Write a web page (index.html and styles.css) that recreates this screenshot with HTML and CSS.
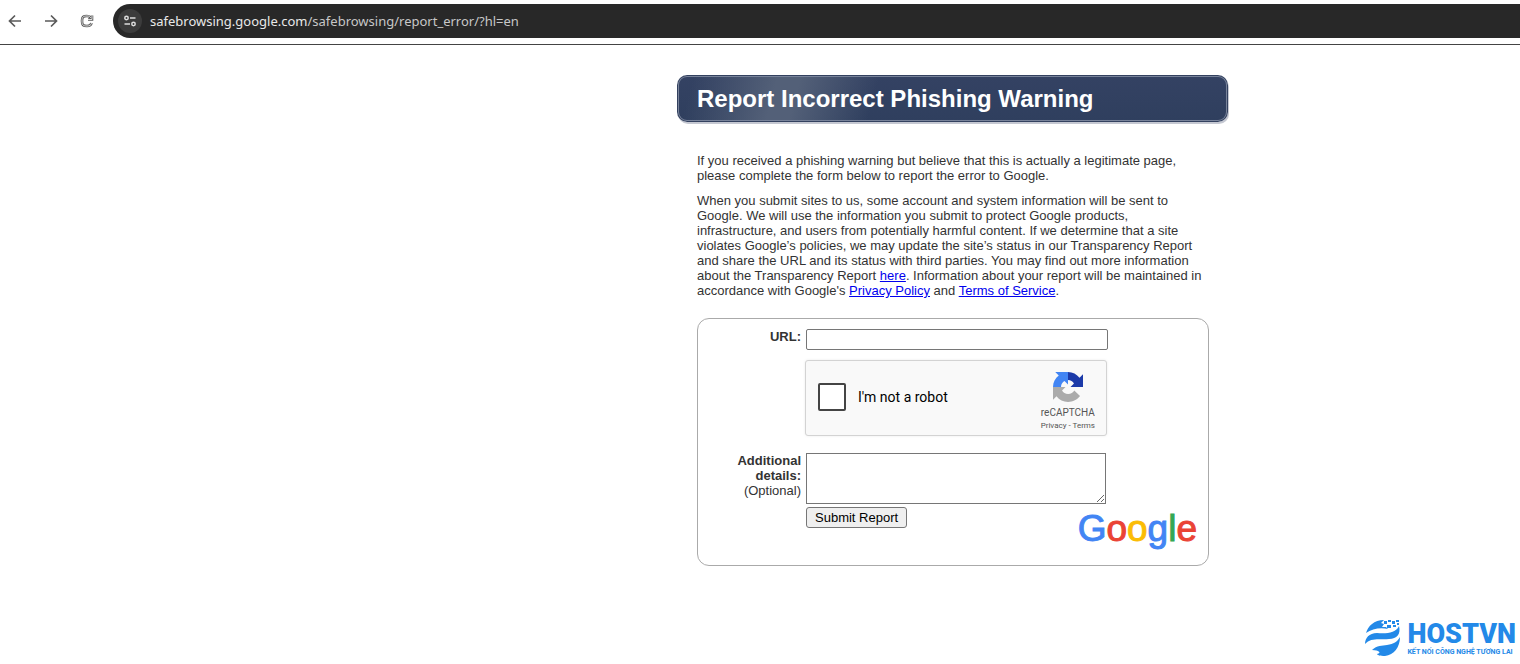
FILE: index.html
```html
<!DOCTYPE html>
<html lang="en">
<head>
  <meta charset="UTF-8">
  <meta name="viewport" content="width=device-width, initial-scale=1.0">
  <title>Report Incorrect Phishing Warning</title>
  <link rel="stylesheet" href="styles.css">
</head>
<body>
  <!-- Browser toolbar -->
  <header class="toolbar">
    <nav class="nav-buttons">
      <button type="button" aria-label="Back">
        <svg width="14" height="14" viewBox="0 0 14 14"><path d="M13 7H2M7 1.5L1.5 7L7 12.5"/></svg>
      </button>
      <button type="button" aria-label="Forward">
        <svg width="14" height="14" viewBox="0 0 14 14"><path d="M1 7H12M7 1.5L12.5 7L7 12.5"/></svg>
      </button>
      <button type="button" aria-label="Reload">
        <svg width="14" height="14" viewBox="0 0 14 14">
          <path class="edge" d="M11.5 9C11 11.5 9.5 12 7 12C3 12 2 11 2 7C2 3 3 2 7 2C9 2 10 2.5 11 4M12 1.5V5.500H8"/>
          <path class="core" d="M11.5 9C11 11.5 9.5 12 7 12C3 12 2 11 2 7C2 3 3 2 7 2C9 2 10 2.5 11 4M12 1.5V5.500H8"/>
        </svg>
      </button>
    </nav>
    <div class="address-bar">
      <button type="button" class="site-info" aria-label="View site information">
        <svg width="14" height="14" viewBox="0 0 14 14">
          <circle cx="3.5" cy="4" r="1.7"/>
          <path d="M7 4H12.5M1.5 10H7"/>
          <circle cx="10.5" cy="10" r="1.7"/>
        </svg>
      </button>
      <span class="url"><b>safebrowsing.google.com</b>/safebrowsing/report_error/?hl=en</span>
    </div>
  </header>

  <main class="page">
    <h1 class="banner">Report Incorrect Phishing Warning</h1>

    <div class="content">
      <p>If you received a phishing warning but believe that this is actually a legitimate page, please complete the form below to report the error to Google.</p>
      <p>When you submit sites to us, some account and system information will be sent to Google. We will use the information you submit to protect Google products, infrastructure, and users from potentially harmful content. If we determine that a site violates Google’s policies, we may update the site’s status in our Transparency Report and share the URL and its status with third parties. You may find out more information about the Transparency Report <a href="#">here</a>. Information about your report will be maintained in accordance with Google's <a href="#">Privacy Policy</a> and <a href="#">Terms of Service</a>.</p>

      <form class="report-form">
        <label for="url">URL:</label>
        <input type="text" id="url" name="url">

        <div class="captcha">
          <input type="checkbox" id="robot" name="robot">
          <label for="robot">I'm not a robot</label>
          <div class="captcha-brand">
            <svg width="32" height="32" viewBox="0 0 64 64">
              <path fill="#1c3aa9" d="M62 31.95V6.59l-7 7C49.5 6.57 41.5 2 31.94 2V18c5.500 0 9.500 2.800 12 7l-7 7H62"/>
              <path fill="#4285f4" d="M31.94 2H6.5l7 7C6.480 14.5 2 22.500 2 32.06H18c0-5.500 2.800-9.500 7-12l7 7V2"/>
              <path fill="#ababab" d="M2 32.06v25.400l7-7C14.500 57.500 22.500 62 32.06 62c9.800 0 18.500-4.700 24-11.900L44.500 39C42 43 38 46 32.060 46c-5.500 0-9.500-2.800-12-7l7-7H2"/>
            </svg>
            <span class="captcha-name">reCAPTCHA</span>
            <span class="captcha-links"><a href="#">Privacy</a> - <a href="#">Terms</a></span>
          </div>
        </div>

        <label for="details">Additional details: <span>(Optional)</span></label>
        <textarea id="details" name="details"></textarea>

        <div class="form-footer">
          <button type="submit">Submit Report</button>
          <div class="google"><span class="blue">G</span><span class="red">o</span><span class="yellow">o</span><span class="blue">g</span><span class="green">l</span><span class="red">e</span></div>
        </div>
      </form>
    </div>
  </main>

  <footer class="hostvn">
    <svg width="36" height="38" viewBox="0 0 36 38">
      <path d="M1 14C3 7 9 1 19 1L16 4L19 5L17 8L21 8L23 10C15 8 7 10 1 14Z"/>
      <path d="M0 25C0 19 4 14 12 14C21 15 31 14 34 7C36 15 32 20 24 20C15 21 6 18 0 25Z"/>
      <path d="M7 31C12 26 17 27 22 26C29 25 32 23 35 18C35 28 29 36 20 37C15 37 12 36 12 35C17 34 14 31 7 31Z"/>
      <path d="M19 2h3v3h-3zM23 1h3v2h-3zM27 2h3v3h-3zM31 1h3v2h-3zM28 6h3v2h-3zM22 6h4v3h-4zM32 4h2v2h-2z"/>
    </svg>
    <div class="hostvn-text">
      <strong>HOSTVN</strong>
      <span>KẾT NỐI CÔNG NGHỆ TƯƠNG LAI</span>
    </div>
  </footer>
</body>
</html>
```
FILE: styles.css
```css
* {
  box-sizing: border-box;
}
body {
  margin: 0;
  min-height: 100vh;
  display: flex;
  flex-direction: column;
  background: #fff;
  color: #333;
  font-family: "Liberation Sans", Arial, sans-serif;
  font-size: 13px;
  line-height: 15px;
}
a {
  color: #0000ee;
}
/* Toolbar */
.toolbar {
  display: flex;
  align-items: center;
  padding: 4px 0 6px;
  border-bottom: 1px solid #444;
}
.nav-buttons {
  display: flex;
  gap: 22px;
  width: 113px;
  padding-left: 8px;
}
.nav-buttons button {
  display: flex;
  padding: 0;
  border: 0;
  background: none;
}
.nav-buttons svg {
  fill: none;
  stroke: #5a5a5a;
  stroke-width: 1.7;
}
.nav-buttons .core {
  stroke: #ddd;
  stroke-width: 1;
}
.nav-buttons .edge {
  stroke-width: 2.6;
}
.address-bar {
  flex: 1;
  display: flex;
  align-items: center;
  gap: 8px;
  height: 34px;
  padding-left: 5px;
  border-radius: 17px 0 0 17px;
  background: #282828;
}
.site-info {
  display: flex;
  align-items: center;
  justify-content: center;
  width: 24px;
  height: 24px;
  padding: 0;
  border: 0;
  border-radius: 50%;
  background: #3c3c3c;
}
.site-info svg {
  fill: none;
  stroke: #ddd;
  stroke-width: 1.5;
}
.url {
  color: #c7c7c7;
  font-family: "Noto Sans", "Open Sans", sans-serif;
  font-size: 13px;
}
.url b {
  color: #e8e8e8;
  font-weight: 400;
}
/* Page */
.page {
  width: 100%;
  max-width: 552px;
  margin: 30px 291px 0 auto;
}
.banner {
  margin: 0 1px 0 0;
  padding: 11px 20px 10px;
  border-radius: 10px;
  background: linear-gradient(105deg, #34436a00 3%, #536078 18%, #536078 22%, #34436a00 36%), linear-gradient(#344263, #2f3f5e);
  box-shadow: inset 0 0 0 1px #33415f, inset 0 0 0 2px #78839a, 1px 2px 0 #c5c8d2;
  color: #fff;
  font-size: 24px;
  line-height: 26px;
}
.content {
  padding: 31px 20px 0;
}
.content p {
  margin: 0 0 10px;
}
/* Form */
.report-form {
  display: grid;
  grid-template-columns: 103px 1fr;
  column-gap: 5px;
  margin-top: 20px;
  padding: 10px 11px 14px 0;
  border: 1px solid #aaa;
  border-radius: 12px;
}
.report-form > label {
  padding-left: 36px;
  font-weight: bold;
  text-align: right;
}
.report-form > label span {
  font-weight: normal;
}
#url {
  width: 302px;
  height: 21px;
  border: 1px solid #767676;
  border-radius: 2px;
}
.captcha {
  grid-column: 2;
  display: flex;
  align-items: center;
  width: 302px;
  height: 76px;
  margin: 10px 0 17px -1px;
  padding: 0 11px 2px 12px;
  border: 1px solid #d3d3d3;
  border-radius: 3px;
  background: #f9f9f9;
  box-shadow: 0 0 3px rgba(0,0,0,0.08);
  color: #000;
  font-family: Roboto, sans-serif;
  font-size: 14px;
}
.captcha input {
  appearance: none;
  width: 28px;
  height: 28px;
  margin: 0 12px 0 0;
  border: 2px solid #444;
  border-radius: 2px;
  background: #fff;
}
.captcha-brand {
  display: flex;
  flex-direction: column;
  align-items: center;
  margin-left: auto;
  padding-top: 8px;
  color: #555;
}
.captcha-name {
  margin-top: 4px;
  font-size: 10px;
  line-height: 12px;
}
.captcha-links {
  font-size: 8px;
  line-height: 13px;
}
.captcha-links a {
  color: #555;
  text-decoration: none;
}
#details {
  width: 300px;
  height: 51px;
  border: 1px solid #767676;
}
.form-footer {
  grid-column: 2;
  display: flex;
  align-items: flex-start;
  justify-content: space-between;
  margin-top: 3px;
}
.form-footer button {
  height: 21px;
  padding: 0 8px;
  border: 1px solid #767676;
  border-radius: 3px;
  background: #efefef;
  color: #000;
  font-family: inherit;
  font-size: 13px;
}
.google {
  font-size: 37px;
  line-height: 44px;
  -webkit-text-stroke: 1px;
}
.blue {
  color: #4285f4;
}
.red {
  color: #ea4335;
}
.yellow {
  color: #fbbc05;
}
.green {
  color: #34a853;
}
/* Hosting logo */
.hostvn {
  display: flex;
  align-items: center;
  gap: 6px;
  margin: auto 4px 7px auto;
  color: #2389e8;
  font-family: Roboto, sans-serif;
}
.hostvn svg {
  fill: #2389e8;
}
.hostvn-text {
  display: flex;
  flex-direction: column;
  padding-top: 2px;
}
.hostvn strong {
  font-size: 27px;
  font-weight: 900;
  line-height: 26px;
}
.hostvn span {
  font-size: 7px;
  font-weight: bold;
  line-height: 10px;
}
```
